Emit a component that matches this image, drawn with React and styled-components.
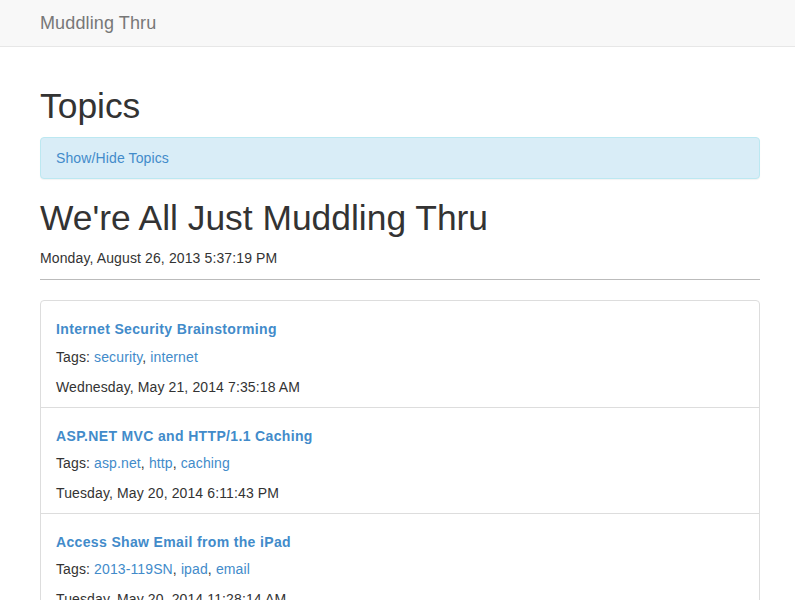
import React from "react";
import styled, { createGlobalStyle } from "styled-components";

const GlobalStyle = createGlobalStyle`
  html, body {
    margin: 0;
    padding: 0;
    background: #fff;
  }
  body {
    font-family: "Liberation Sans", Arial, sans-serif;
    font-size: 14px;
    line-height: 20px;
    letter-spacing: 0.12px;
    color: #333;
  }
`;

const posts = [
  {
    title: "Internet Security Brainstorming",
    tags: ["security", "internet"],
    date: "Wednesday, May 21, 2014 7:35:18 AM",
  },
  {
    title: "ASP.NET MVC and HTTP/1.1 Caching",
    tags: ["asp.net", "http", "caching"],
    date: "Tuesday, May 20, 2014 6:11:43 PM",
  },
  {
    title: "Access Shaw Email from the iPad",
    tags: ["2013-119SN", "ipad", "email"],
    date: "Tuesday, May 20, 2014 11:28:14 AM",
  },
];

const App = () => {
  return (
    <>
      <GlobalStyle />
      <Navbar>
        <Brand href="#">Muddling Thru</Brand>
      </Navbar>
      <Container>
        <Heading>Topics</Heading>
        <TopicsPanel>
          <PanelLink href="#">Show/Hide Topics</PanelLink>
        </TopicsPanel>
        <Heading>We're All Just Muddling Thru</Heading>
        <Stamp>Monday, August 26, 2013 5:37:19 PM</Stamp>
        <Rule />
        <PostList>
          {posts.map((post) => (
            <PostItem key={post.title}>
              <PostTitle href="#">{post.title}</PostTitle>
              <TagLine>
                Tags:{" "}
                {post.tags.map((tag, i) => (
                  <React.Fragment key={tag}>
                    <TagLink href="#">{tag}</TagLink>
                    {i < post.tags.length - 1 ? ", " : ""}
                  </React.Fragment>
                ))}
              </TagLine>
              <PostDate>{post.date}</PostDate>
            </PostItem>
          ))}
        </PostList>
      </Container>
    </>
  );
};

export default App;

const Navbar = styled.nav`
  background: #f8f8f8;
  border-bottom: 1px solid #e7e7e7;
  padding: 13px 40px;
  height: 20px;
`;

const Brand = styled.a`
  font-size: 18px;
  line-height: 20px;
  color: #777;
  text-decoration: none;
`;

const Container = styled.div`
  width: 720px;
  margin-left: 40px;
  padding-top: 40px;
`;

const Heading = styled.h1`
  font-size: 35.4px;
  font-weight: 400;
  line-height: 39.6px;
  letter-spacing: 0;
  margin: 0 0 10px;
  color: #333;
`;

const TopicsPanel = styled.div`
  background: #d9edf7;
  border: 1px solid #bce8f1;
  border-radius: 4px;
  padding: 10px 15px;
  margin-bottom: 20px;
  box-shadow: 0 1px 1px rgba(0, 0, 0, 0.05);
`;

const PanelLink = styled.a`
  color: #428bca;
  text-decoration: none;
`;

const Stamp = styled.div`
  margin-bottom: 11px;
`;

const Rule = styled.hr`
  border: 0;
  border-top: 1px solid #bbb;
  margin: 0 0 20px;
`;

const PostList = styled.div`
  border: 1px solid #ddd;
  border-radius: 4px;
`;

const PostItem = styled.div`
  padding: 10px 15px;
  & + & {
    border-top: 1px solid #ddd;
  }
`;

const PostTitle = styled.a`
  display: block;
  font-weight: 700;
  line-height: 1.1;
  letter-spacing: 0.35px;
  margin: 11px 0 9px;
  color: #428bca;
  text-decoration: none;
`;

const TagLine = styled.p`
  margin: 0 0 10px;
`;

const TagLink = styled.a`
  color: #428bca;
  text-decoration: none;
`;

const PostDate = styled.div``;
